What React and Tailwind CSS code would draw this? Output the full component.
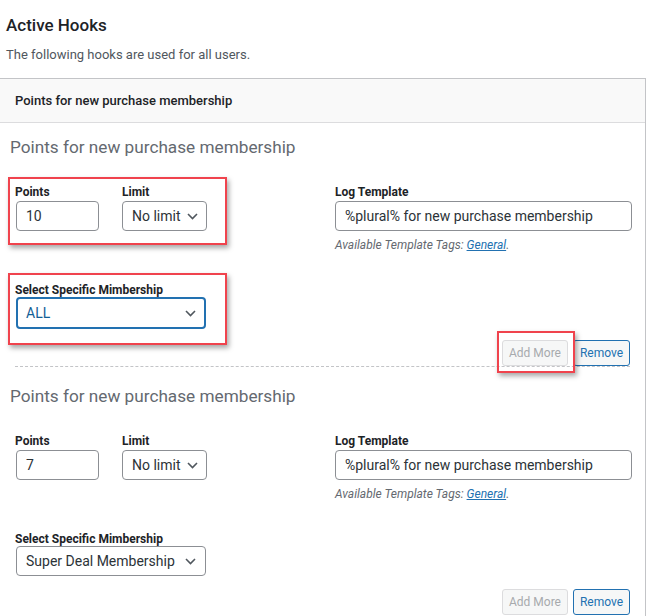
import React from "react";

const Chevron = () => (
  <svg width="11" height="7" viewBox="0 0 11 7" className="shrink-0" aria-hidden="true">
    <path d="M1 1l4.5 4.5L10 1" fill="none" stroke="#50575e" strokeWidth="1.6" />
  </svg>
);

function Section({ value, membership, focused, pt, annotate, last }) {
  return (
    <div className={`relative mx-[15px] ${pt} ${last ? "" : "border-b border-dashed border-[#c3c4c7]"}`}>
      <h3 className="-ml-[5px] text-[17.2px] leading-[24px] text-[#646970] font-normal">
        Points for new purchase membership
      </h3>
      <div className="mt-[25px] flex">
        <div className="w-[320px] shrink-0">
          <div className="flex">
            <div className="w-[107px]">
              <div className="text-[12px] leading-[16px] font-bold text-[#1d2327]">Points</div>
              <div className="ml-[1px] mt-[1px] w-[83px] h-[30px] border border-[#8c8f94] rounded-[4px] px-[9px] flex items-center text-[14px] text-[#2c3338]">
                {value}
              </div>
            </div>
            <div>
              <div className="text-[12px] leading-[16px] font-bold text-[#1d2327]">Limit</div>
              <div className="mt-[1px] w-[85px] h-[30px] border border-[#8c8f94] rounded-[4px] pl-[9px] pr-[8px] flex items-center justify-between text-[14px] text-[#2c3338] whitespace-nowrap">
                <span>No limit</span>
                <Chevron />
              </div>
            </div>
          </div>
          <div className="mt-[52px] text-[12px] leading-[14px] font-bold text-[#1d2327]">
            Select Specific Mimbership
          </div>
          {focused ? (
            <div className="ml-[1px] mt-0 w-[190px] h-[32px] border-2 border-[#2271b1] rounded-[4px] pl-[8px] pr-[8px] flex items-center justify-between text-[14px] text-[#135e96]">
              <span>{membership}</span>
              <Chevron />
            </div>
          ) : (
            <div className="ml-[1px] mt-0 w-[190px] h-[30px] border border-[#8c8f94] rounded-[4px] pl-[9px] pr-[9px] flex items-center justify-between text-[14px] text-[#2c3338] whitespace-nowrap">
              <span>{membership}</span>
              <Chevron />
            </div>
          )}
        </div>
        <div className="shrink-0">
          <div className="text-[12px] leading-[16px] font-bold text-[#1d2327]">Log Template</div>
          <div className="mt-[1px] w-[297px] h-[30px] border border-[#8c8f94] rounded-[4px] px-[9px] flex items-center text-[14px] text-[#2c3338] whitespace-nowrap">
            %plural% for new purchase membership
          </div>
          <div className="mt-[6px] text-[12px] leading-[16px] italic text-[#646970]">
            Available Template Tags: <span className="underline text-[#2271b1]">General</span>.
          </div>
        </div>
      </div>
      <div className={`flex justify-end gap-[5px] ${focused ? "mt-[11px]" : "mt-[13px]"}`}>
        <div className="h-[26px] w-[66px] border border-[#dcdcde] bg-[#f6f7f7] rounded-[3px] text-[12px] text-[#a7aaad] flex items-center justify-center">
          Add More
        </div>
        <div className="h-[26px] w-[57px] border border-[#2271b1] bg-[#f6f7f7] rounded-[3px] text-[12px] text-[#2271b1] flex items-center justify-center">
          Remove
        </div>
      </div>
      {annotate && (
        <>
          <div className="absolute left-[-7px] top-[54px] w-[219px] h-[68px] border-2 border-[#f0434d] shadow-[2px_3px_5px_rgba(0,0,0,0.35)] pointer-events-none" />
          <div className="absolute left-[-7px] top-[150px] w-[219px] h-[72px] border-2 border-[#f0434d] shadow-[2px_3px_5px_rgba(0,0,0,0.35)] pointer-events-none" />
          <div className="absolute left-[482px] top-[208px] w-[78px] h-[42px] border-2 border-[#f0434d] shadow-[2px_3px_5px_rgba(0,0,0,0.35)] pointer-events-none" />
        </>
      )}
    </div>
  );
}

export default function App() {
  return (
    <div
      className="w-[654px] h-[616px] overflow-hidden bg-white"
      style={{ fontFamily: 'Roboto, "Noto Sans", sans-serif' }}
    >
      <div className="px-[6px] pt-[14px]">
        <h2 className="text-[17px] leading-[22px] font-medium text-[#1d2327]">Active Hooks</h2>
        <p className="mt-[10px] text-[13px] leading-[18px] text-[#50575e]">
          The following hooks are used for all users.
        </p>
      </div>
      <div className="mt-[14px] w-[646px] border-t border-r border-[#c3c4c7] h-[600px]">
        <div className="h-[44px] bg-[#f9f9f9] border-b border-[#dcdcde] flex items-center pl-[15px] text-[13px] font-medium text-[#1d2327]">
          Points for new purchase membership
        </div>
        <Section value="10" membership="ALL" focused pt="pt-[12px]" annotate />
        <Section value="7" membership="Super Deal Membership" pt="pt-[17px]" last />
      </div>
    </div>
  );
}
